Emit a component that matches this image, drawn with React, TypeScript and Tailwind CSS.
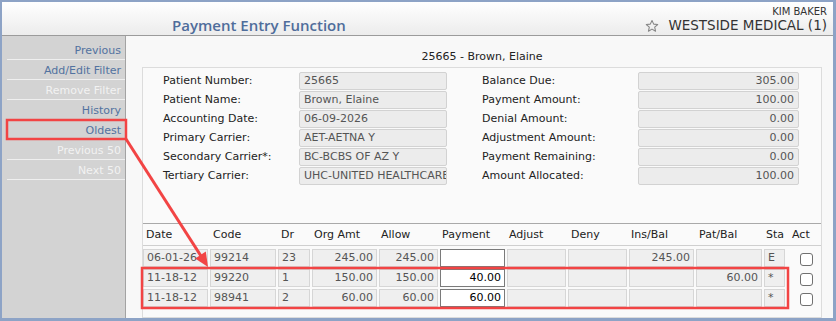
import React from "react";

const leftRows: [string, string][] = [
  ["Patient Number:", "25665"],
  ["Patient Name:", "Brown, Elaine"],
  ["Accounting Date:", "06-09-2026"],
  ["Primary Carrier:", "AET-AETNA Y"],
  ["Secondary Carrier*:", "BC-BCBS OF AZ Y"],
  ["Tertiary Carrier:", "UHC-UNITED HEALTHCARE"],
];

const rightRows: [string, string][] = [
  ["Balance Due:", "305.00"],
  ["Payment Amount:", "100.00"],
  ["Denial Amount:", "0.00"],
  ["Adjustment Amount:", "0.00"],
  ["Payment Remaining:", "0.00"],
  ["Amount Allocated:", "100.00"],
];

const sideItems: { label: string; enabled: boolean }[] = [
  { label: "Previous", enabled: true },
  { label: "Add/Edit Filter", enabled: true },
  { label: "Remove Filter", enabled: false },
  { label: "History", enabled: true },
  { label: "Oldest", enabled: true },
  { label: "Previous 50", enabled: false },
  { label: "Next 50", enabled: false },
];

const headers = ["Date", "Code", "Dr", "Org Amt", "Allow", "Payment", "Adjust", "Deny", "Ins/Bal", "Pat/Bal", "Sta", "Act"];

type Row = string[];
const rows: Row[] = [
  ["06-01-26", "99214", "23", "245.00", "245.00", "", "", "", "245.00", "", "E"],
  ["11-18-12", "99220", "1", "150.00", "150.00", "40.00", "", "", "", "60.00", "*"],
  ["11-18-12", "98941", "2", "60.00", "60.00", "60.00", "", "", "", "", "*"],
];

const rightAligned = [false, false, false, true, true, true, true, true, true, true, false];

function Star() {
  return (
    <svg width="14" height="14" viewBox="0 0 24 24" className="mr-[9px] mt-[1px]">
      <path
        d="M12 2.5l2.9 6.3 6.9.7-5.2 4.6 1.5 6.8L12 17.4l-6.1 3.5 1.5-6.8-5.2-4.6 6.9-.7z"
        fill="none"
        stroke="#858585"
        strokeWidth="1.8"
        strokeLinejoin="round"
      />
    </svg>
  );
}

export default function App() {
  return (
    <div className="relative w-[836px] h-[321px] overflow-hidden border-l-2 border-t-2 border-r-[3px] border-b-[3px] border-[#8da3c6] bg-[#f8f8f8] flex flex-col font-['DejaVu_Sans',sans-serif] text-[11px] text-[#222]">
      {/* Header */}
      <div className="h-[34px] shrink-0 border-b border-[#9b9b9b] bg-gradient-to-b from-white to-[#ececec] flex justify-between">
        <div className="pl-[170px] pt-[13px] font-['Open_Sans',sans-serif] font-semibold text-[15px] leading-[20px] text-[#4f6d9b]">
          Payment Entry Function
        </div>
        <div className="pr-[6px] pt-[3.5px] flex flex-col items-end">
          <div className="text-[10px] leading-[12px] text-[#333]">KIM BAKER</div>
          <div className="flex items-center text-[13.5px] leading-[15px] text-[#333]">
            <Star />
            <span>WESTSIDE MEDICAL (1)</span>
          </div>
        </div>
      </div>

      {/* Body */}
      <div className="flex flex-1 min-h-0">
        {/* Sidebar */}
        <div className="w-[124px] shrink-0 bg-[#d3d3d3] border-r border-[#a3a3a3] pt-[4px]">
          {sideItems.map((it) => (
            <div
              key={it.label}
              className={
                "ml-[5px] h-[20px] border-b border-[#efefef] text-right pr-[4px] leading-[21px] " +
                (it.enabled ? "text-[#5272a0]" : "text-[#f2f2f2]")
              }
            >
              {it.label}
            </div>
          ))}
        </div>

        {/* Main */}
        <div className="flex-1 min-w-0 flex flex-col pl-[16px] pr-[11px] pt-[13px]">
          <div className="text-center leading-[16px] text-[#222]">25665 - Brown, Elaine</div>
          <div className="mt-[2px] flex-1 border border-[#dcdcdc] bg-[#fafafa] pt-[4px]">
            {/* Form */}
            <div className="flex pl-[20px]">
              <div className="grid grid-cols-[136px_148px] gap-y-[1px]">
                {leftRows.map(([l, v]) => (
                  <React.Fragment key={l}>
                    <div className="h-[18px] leading-[18px]">{l}</div>
                    <div className="h-[18px] border border-[#d2d2d2] rounded-[2px] bg-[#ececec] text-[#555] leading-[16px] pl-[4px] overflow-hidden whitespace-nowrap">
                      {v}
                    </div>
                  </React.Fragment>
                ))}
              </div>
              <div className="ml-[35px] grid grid-cols-[156px_161px] gap-y-[1px]">
                {rightRows.map(([l, v]) => (
                  <React.Fragment key={l}>
                    <div className="h-[18px] leading-[18px]">{l}</div>
                    <div className="h-[18px] border border-[#d2d2d2] rounded-[2px] bg-[#ececec] text-[#555] leading-[16px] pr-[4px] text-right">
                      {v}
                    </div>
                  </React.Fragment>
                ))}
              </div>
            </div>

            {/* Table */}
            <div className="mt-[38px] border-t border-[#a9a9a9]">
              <div className="grid grid-cols-[65px_66px_32px_65px_59px_65px_59px_59px_65px_66px_21px_1fr] gap-x-[2px] h-[22px] border-b border-[#cfcfcf] leading-[22px] text-[#222]">
                {headers.map((h) => (
                  <div key={h} className={h === "Act" ? "pl-[5px]" : h === "Date" || h === "Code" || h === "Dr" || h === "Deny" || h === "Pat/Bal" ? "pl-[3px]" : "pl-[2px]"}>
                    {h}
                  </div>
                ))}
              </div>
              <div className="pt-[3px] flex flex-col gap-y-[2px]">
                {rows.map((r, ri) => (
                  <div key={ri} className="grid grid-cols-[65px_66px_32px_65px_59px_65px_59px_59px_65px_66px_21px_1fr] gap-x-[2px]">
                    {r.map((c, ci) =>
                      ci === 5 ? (
                        <div
                          key={ci}
                          className="h-[18px] border border-[#7a7a7a] bg-white text-black text-right pr-[3px] leading-[16px]"
                        >
                          {c}
                        </div>
                      ) : (
                        <div
                          key={ci}
                          className={
                            "h-[18px] border border-[#d6d6d6] bg-[#efefef] text-[#555] leading-[16px] overflow-hidden whitespace-nowrap " +
                            (rightAligned[ci] ? "text-right pr-[3px]" : "pl-[3px]")
                          }
                        >
                          {c}
                        </div>
                      )
                    )}
                    <div className="pl-[13px] pt-[4px]">
                      <div className="w-[13px] h-[13px] rounded-[3px] border border-[#707070] bg-white" />
                    </div>
                  </div>
                ))}
              </div>
            </div>
          </div>
        </div>
      </div>

      {/* Annotation overlay */}
      <svg
        className="absolute left-[-2px] top-[-2px] pointer-events-none"
        width="836"
        height="321"
        viewBox="0 0 836 321"
      >
        <rect x="7" y="120" width="119" height="19" fill="none" stroke="#f24444" strokeWidth="2.5" />
        <rect x="142" y="268" width="646" height="40" fill="none" stroke="#f24444" strokeWidth="2.5" />
        <line x1="126" y1="139" x2="201" y2="256" stroke="#f24444" strokeWidth="3" />
        <polygon points="208,267 205.8,251.6 195.2,258.4" fill="#f24444" />
      </svg>
    </div>
  );
}
